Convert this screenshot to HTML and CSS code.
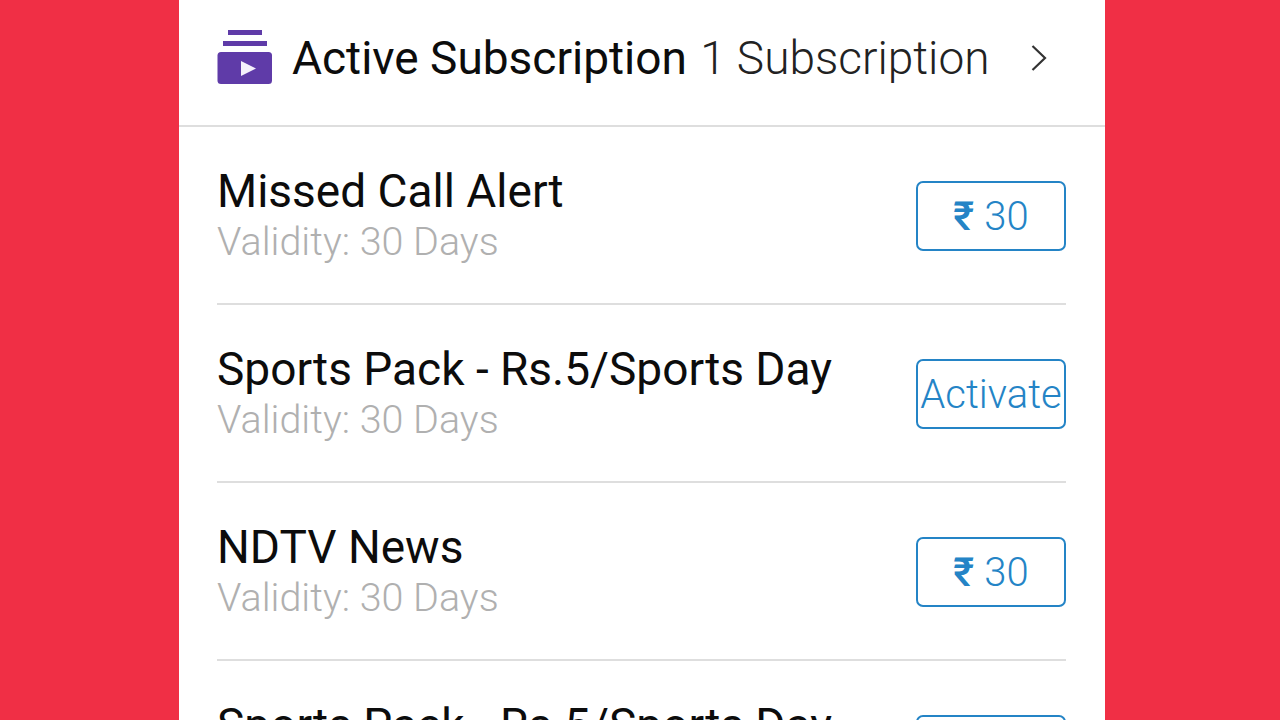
FILE: index.html
```html
<!DOCTYPE html>
<html>
<head>
    <meta charset="UTF-8">
    <title>Active Subscription</title>
    <link rel="stylesheet" href="styles.css">
</head>
<body>
    <div class="phone">
        <div class="header">
            <svg class="header-icon" width="56" height="56" viewBox="0 0 56 56">
                <rect x="11" y="0" width="34" height="5" fill="#5f3ba8"/>
                <rect x="6" y="11" width="44" height="5" fill="#5f3ba8"/>
                <rect x="0.500" y="22" width="54.500" height="32" rx="3.500" fill="#5f3ba8"/>
                <path d="M24 31 L39 38.500 L24 46 Z" fill="#f4f0fb"/>
            </svg>
            <div class="header-text"><span class="header-title">Active Subscription</span> <span class="header-count">1 Subscription</span></div>
            <svg class="chevron" width="18" height="30" viewBox="0 0 18 30">
                <path d="M2.500 3 L15 15 L2.500 27" fill="none" stroke="#333" stroke-width="2.200"/>
            </svg>
        </div>
        <div class="list">
            <div class="row">
                <div class="info">
                    <div class="name">Missed Call Alert</div>
                    <div class="validity">Validity: 30 Days</div>
                </div>
                <div class="btn"><span class="rupee">₹</span> 30</div>
            </div>
            <div class="row">
                <div class="info">
                    <div class="name">Sports Pack - Rs.5/Sports Day</div>
                    <div class="validity">Validity: 30 Days</div>
                </div>
                <div class="btn">Activate</div>
            </div>
            <div class="row">
                <div class="info">
                    <div class="name">NDTV News</div>
                    <div class="validity">Validity: 30 Days</div>
                </div>
                <div class="btn"><span class="rupee">₹</span> 30</div>
            </div>
            <div class="row">
                <div class="info">
                    <div class="name">Sports Pack - Rs.5/Sports Day</div>
                    <div class="validity">Validity: 30 Days</div>
                </div>
                <div class="btn">Activate</div>
            </div>
        </div>
    </div>
</body>
</html>
```
FILE: styles.css
```css
html, body {
    margin: 0;
    height: 720px;
    overflow: hidden;
}
body {
    background: #f02f45;
    font-family: Roboto, "Noto Sans", sans-serif;
}
.phone {
    width: 926px;
    height: 720px;
    margin-left: 179px;
    background: #fff;
    overflow: hidden;
}
.header {
    height: 127px;
    box-sizing: border-box;
    padding: 0 57px 9px 38px;
    display: flex;
    align-items: center;
    border-bottom: 2px solid #dedede;
}
.header-icon {
    flex: none;
    margin-right: 19px;
}
.header-text {
    flex: 1;
    font-size: 46px;
    font-weight: 300;
    color: #222;
    white-space: nowrap;
}
.header-title {
    font-weight: 400;
    color: #0c0c0c;
}
.header-count {
    margin-left: 2px;
}
.list {
    padding: 0 39px 0 38px;
}
.row {
    height: 176px;
    display: flex;
    align-items: center;
    justify-content: space-between;
    border-bottom: 2px solid #dedede;
}
.info {
    margin-top: 3px;
}
.name {
    font-size: 46px;
    line-height: 50px;
    color: #0c0c0c;
}
.validity {
    font-size: 39.500px;
    line-height: 51px;
    font-weight: 300;
    color: #b0b0b0;
}
.btn {
    width: 150px;
    height: 70px;
    margin-top: 2px;
    box-sizing: border-box;
    border: 2.500px solid #2484c6;
    border-radius: 7px;
    display: flex;
    align-items: center;
    justify-content: center;
    gap: 10px;
    font-size: 40px;
    font-weight: 300;
    color: #2484c6;
    white-space: nowrap;
}
.rupee {
    font-weight: 500;
}
```
